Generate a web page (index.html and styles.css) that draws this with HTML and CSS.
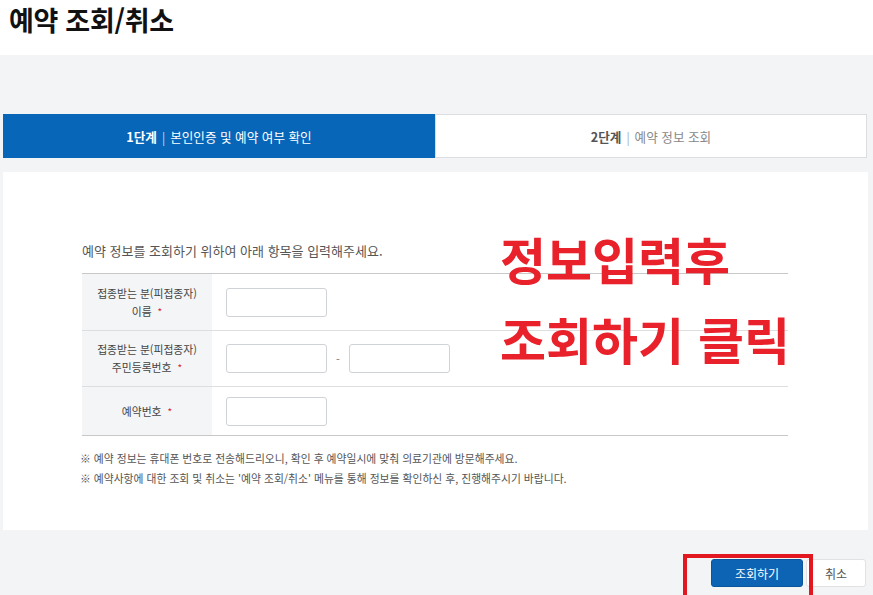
FILE: index.html
```html
<!DOCTYPE html>
<html lang="ko">
<head>
<meta charset="utf-8">
<title>예약 조회/취소</title>
<link rel="stylesheet" href="styles.css">
</head>
<body>
<header class="page-header">
  <h1 class="page-title">예약 조회/취소</h1>
</header>
<main class="main">
  <div class="steps">
    <div class="step step-active"><b>1단계</b><span class="sep">|</span>본인인증 및 예약 여부 확인</div>
    <div class="step step-next"><b>2단계</b><span class="sep">|</span>예약 정보 조회</div>
  </div>
  <section class="card">
    <p class="intro">예약 정보를 조회하기 위하여 아래 항목을 입력해주세요.</p>
    <div class="form-table">
      <div class="row row-1">
        <div class="label"><div>접종받는 분(피접종자)<br>이름 <span class="req">*</span></div></div>
        <div class="field"><span class="input"></span></div>
      </div>
      <div class="row row-2">
        <div class="label"><div>접종받는 분(피접종자)<br>주민등록번호 <span class="req">*</span></div></div>
        <div class="field"><span class="input"></span><span class="dash">-</span><span class="input"></span></div>
      </div>
      <div class="row row-3">
        <div class="label"><div>예약번호 <span class="req">*</span></div></div>
        <div class="field"><span class="input"></span></div>
      </div>
    </div>
    <ul class="notes">
      <li>※ 예약 정보는 휴대폰 번호로 전송해드리오니, 확인 후 예약일시에 맞춰 의료기관에 방문해주세요.</li>
      <li>※ 예약사항에 대한 조회 및 취소는 '예약 조회/취소' 메뉴를 통해 정보를 확인하신 후, 진행해주시기 바랍니다.</li>
    </ul>
    <div class="annotation">정보입력후<br>조회하기 클릭</div>
  </section>
  <div class="actions">
    <button class="btn btn-primary">조회하기</button>
    <button class="btn btn-cancel">취소</button>
    <span class="highlight"></span>
  </div>
</main>
</body>
</html>
```
FILE: styles.css
```css
* { box-sizing: border-box; }
html, body { margin: 0; padding: 0; }
body {
  width: 873px;
  height: 595px;
  overflow: hidden;
  font-family: "Noto Sans CJK KR", "Noto Sans", sans-serif;
  background: #f3f4f6;
  color: #333;
}
.page-header {
  height: 55px;
  background: #fff;
  padding: 0 0 0 9px;
}
.page-title {
  margin: 0;
  font-size: 27px;
  font-weight: 700;
  line-height: 39px;
  color: #111;
  letter-spacing: -0.3px;
}
.main {
  padding: 59px 6px 0 3px;
  position: relative;
}
.steps {
  display: flex;
  height: 44px;
}
.step {
  display: flex;
  align-items: center;
  justify-content: center;
  font-size: 12.6px;
}
.step b { font-weight: 700; }
.sep { margin: 0 5px; font-weight: 300; }
.step-active {
  width: 432px;
  background: #0866b9;
  color: #fff;
}
.step-next {
  flex: 1;
  background: #fff;
  border: 1px solid #dcdde0;
  color: #888;
}
.step-next b { color: #555; }
.card {
  position: relative;
  margin-top: 14px;
  margin-right: -1px;
  height: 358px;
  background: #fff;
  padding: 70px 0 0 79px;
}
.intro {
  margin: 0 0 13px;
  font-size: 13px;
  line-height: 18px;
  color: #555;
}
.form-table {
  width: 706px;
  border-top: 1px solid #c8c8c8;
  border-bottom: 1px solid #c8c8c8;
}
.row {
  display: flex;
  border-bottom: 1px solid #dedede;
}
.row:last-child { border-bottom: none; }
.row-1 { height: 57px; }
.row-2 { height: 56px; }
.row-3 { height: 48px; }
.label {
  width: 130px;
  background: #f4f5f7;
  display: flex;
  align-items: center;
  justify-content: center;
  text-align: center;
  font-size: 10.8px;
  line-height: 18px;
  color: #444;
}
.req { color: #d52a2a; font-size: 10px; margin-left: 3px; }
.field {
  flex: 1;
  display: flex;
  align-items: center;
  padding-left: 14px;
}
.input {
  width: 101px;
  height: 29px;
  border: 1px solid #cfd2d6;
  border-radius: 3px;
  background: #fff;
}
.dash {
  width: 22px;
  text-align: center;
  font-size: 11px;
  color: #777;
}
.notes {
  list-style: none;
  margin: 12px 0 0 -2px;
  padding: 0;
  font-size: 10.8px;
  line-height: 20px;
  color: #555;
}
.annotation {
  position: absolute;
  left: 497px;
  top: 46px;
  font-size: 50px;
  font-weight: 700;
  line-height: 80px;
  color: #e8212b;
  white-space: nowrap;
}
.actions {
  position: relative;
  display: flex;
  justify-content: flex-end;
  gap: 3px;
  margin-top: 29px;
  margin-right: 1px;
}
.btn {
  height: 28px;
  font-family: inherit;
  font-size: 12px;
  border-radius: 3px;
  padding: 0;
  cursor: pointer;
}
.btn-primary {
  width: 92px;
  background: #0d64b4;
  border: 1px solid #0a569d;
  color: #fff;
}
.btn-cancel {
  width: 60px;
  background: #fff;
  border: 1px solid #e2e2e2;
  color: #555;
}
.highlight {
  position: absolute;
  left: 680px;
  top: -5px;
  width: 130px;
  height: 50px;
  border: 4px solid #e3171f;
}
```
